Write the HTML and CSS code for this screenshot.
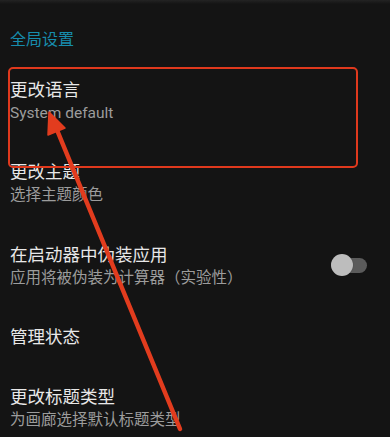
FILE: index.html
```html
<!DOCTYPE html>
<html lang="zh">
<head>
<meta charset="utf-8">
<title>设置</title>
<link rel="stylesheet" href="styles.css">
</head>
<body>
<div class="screen">
  <div class="section-title">全局设置</div>
  <div class="item">
    <div class="texts">
      <div class="title">更改语言</div>
      <div class="summary">System default</div>
    </div>
  </div>
  <div class="item">
    <div class="texts">
      <div class="title">更改主题</div>
      <div class="summary">选择主题颜色</div>
    </div>
  </div>
  <div class="item">
    <div class="texts">
      <div class="title">在启动器中伪装应用</div>
      <div class="summary">应用将被伪装为计算器（实验性）</div>
    </div>
    <div class="switch"><span class="track"></span><span class="thumb"></span></div>
  </div>
  <div class="item">
    <div class="texts">
      <div class="title">管理状态</div>
    </div>
  </div>
  <div class="item">
    <div class="texts">
      <div class="title">更改标题类型</div>
      <div class="summary">为画廊选择默认标题类型</div>
    </div>
  </div>

  <div class="highlight"></div>
  <svg class="arrow" width="390" height="437" viewBox="0 0 390 437">
    <line x1="180" y1="429" x2="57" y2="130" stroke="#e23c1e" stroke-width="4.5" stroke-linecap="round"/>
    <polygon points="49,112 65,128 48,135" fill="#e23c1e" stroke="#e23c1e" stroke-width="1.5" stroke-linejoin="round"/>
  </svg>
</div>
</body>
</html>
```
FILE: styles.css
```css
html, body {
  margin: 0;
  padding: 0;
  background: #141414;
}
.screen {
  position: relative;
  width: 390px;
  height: 437px;
  overflow: hidden;
  background: linear-gradient(#232323 0, #141414 4px);
  font-family: Roboto, "Noto Sans CJK SC", sans-serif;
}
.section-title {
  padding: 28px 10px 0;
  line-height: 24px;
  font-size: 16px;
  color: #178cad;
  margin-bottom: 8.25px;
}
.item {
  display: flex;
  align-items: center;
  padding: 18.25px 23px 18.25px 10px;
}
.texts {
  flex: 1;
}
.title {
  font-size: 17.5px;
  line-height: 23px;
  color: #e8e8e8;
}
.summary {
  font-size: 15.5px;
  line-height: 23px;
  color: #9c9c9c;
}
.switch {
  position: relative;
  width: 36px;
  height: 22px;
  margin-top: -3px;
}
.track {
  position: absolute;
  left: 0;
  top: 3.5px;
  width: 36px;
  height: 15px;
  border-radius: 8px;
  background: #5b5b5b;
}
.thumb {
  position: absolute;
  left: 0;
  top: 0;
  width: 22px;
  height: 22px;
  border-radius: 50%;
  background: #bdbdbd;
  box-shadow: 0 0 1px rgba(0,0,0,0.5);
}
.highlight {
  position: absolute;
  left: 8px;
  top: 67px;
  width: 350px;
  height: 101px;
  box-sizing: border-box;
  border: 2px solid #e0391d;
  border-radius: 5px;
}
.arrow {
  position: absolute;
  left: 0;
  top: 0;
}
```
